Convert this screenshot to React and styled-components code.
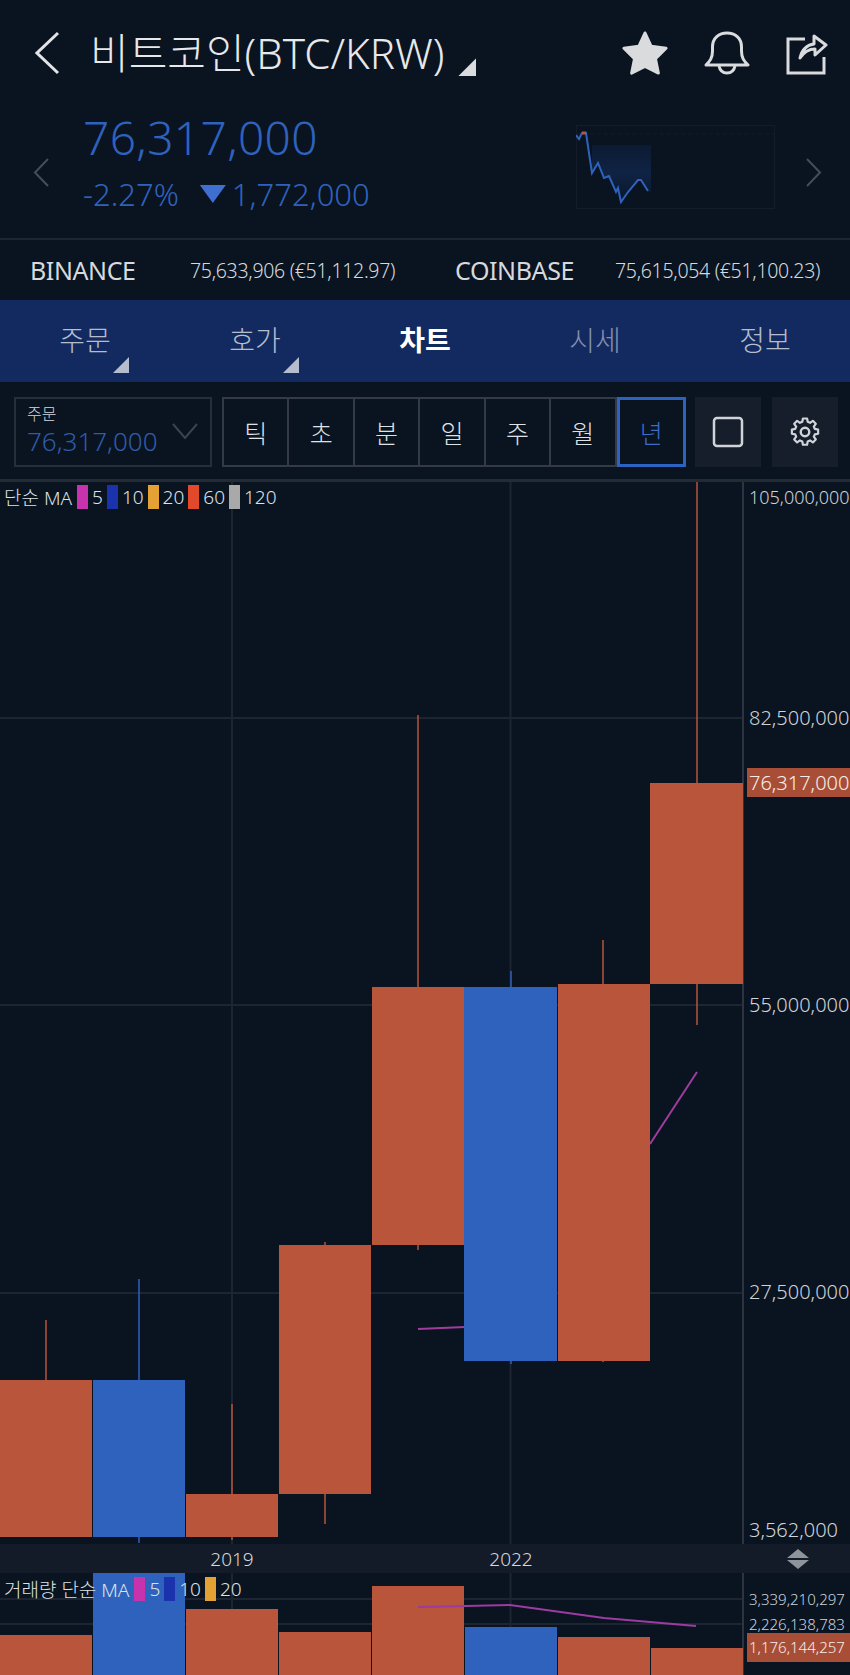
import styled, { createGlobalStyle } from "styled-components";

const RED = "#b9553a";
const BLUE = "#2e62bd";
const BG = "#0a1320";
const GRID = "#1c2531";
const TEXT = "#d6dade";

const GlobalStyle = createGlobalStyle`
  html, body {
    margin: 0;
    padding: 0;
    background: ${BG};
  }
  * {
    box-sizing: border-box;
  }
`;

const Screen = styled.div`
  width: 850px;
  height: 1675px;
  overflow: hidden;
  background: ${BG};
  color: ${TEXT};
  font-family: "Noto Sans", "Noto Sans CJK KR", sans-serif;
`;

const Header = styled.header`
  height: 240px;
  border-bottom: 2px solid ${GRID};
`;

const TitleRow = styled.div`
  display: flex;
  align-items: center;
  height: 106px;
  padding: 0 22px 0 35px;
`;

const Title = styled.h1`
  flex: 1;
  margin: 0 0 0 30px;
  font-size: 42px;
  font-weight: 300;
  line-height: 56px;
  color: #e6e8ea;
  white-space: nowrap;
`;

const Corner = styled.span`
  display: inline-block;
  width: ${(p) => p.$size}px;
  height: ${(p) => p.$size}px;
  margin-left: ${(p) => p.$gap || 0}px;
  vertical-align: ${(p) => p.$drop || 0}px;
  background: ${(p) => p.$color};
  clip-path: polygon(100% 0, 100% 100%, 0 100%);
`;

const TitleIcons = styled.div`
  display: flex;
  align-items: center;
  gap: 36px;
`;

const PriceRow = styled.div`
  display: flex;
  align-items: center;
  height: 132px;
  padding: 0 28px 0 33px;
`;

const PriceBlock = styled.div`
  flex: 1;
  margin: -18px 0 0 33px;
  color: ${BLUE};
`;

const Price = styled.div`
  font-size: 46px;
  font-weight: 300;
  line-height: 50px;
  letter-spacing: 0.4px;
`;

const Change = styled.div`
  display: flex;
  align-items: center;
  margin-top: 12px;
  font-size: 31px;
  font-weight: 300;
  line-height: 40px;
`;

const DownMark = styled.span`
  width: 26px;
  height: 18px;
  margin: 0 6px 0 21px;
  background: #3f6fd0;
  clip-path: polygon(0 0, 100% 0, 50% 100%);
`;

const Spark = styled.svg`
  display: block;
  width: 199px;
  height: 84px;
  margin: 0 30px 10px 0;
`;

const ExchangeRow = styled.div`
  display: flex;
  align-items: center;
  height: 60px;
  padding: 0 0 0 30px;
`;

const ExchangeName = styled.span`
  width: ${(p) => p.$width}px;
  font-size: 25px;
  font-weight: 400;
  letter-spacing: -0.4px;
`;

const ExchangeValue = styled.span`
  width: ${(p) => p.$width}px;
  font-size: 19.5px;
  font-weight: 300;
  letter-spacing: -0.3px;
  white-space: nowrap;
`;

const TabBar = styled.nav`
  display: grid;
  grid-template-columns: repeat(5, 170px);
  height: 82px;
  background: #122a5f;
`;

const Tab = styled.div`
  position: relative;
  display: flex;
  align-items: center;
  justify-content: center;
  padding-bottom: 4px;
  font-size: 28px;
  font-weight: ${(p) => (p.$active ? 700 : 300)};
  color: ${(p) => (p.$active ? "#ffffff" : p.$dim ? "#8290ad" : "#b4bccd")};
`;

const TabCorner = styled.span`
  position: absolute;
  top: 57px;
  left: 113px;
  line-height: 0;
`;

const Toolbar = styled.div`
  display: flex;
  align-items: flex-start;
  height: 100px;
  padding: 15px 0 0 14px;
  border-bottom: 3px solid #232b36;
`;

const OrderBox = styled.div`
  position: relative;
  width: 198px;
  height: 70px;
  margin-right: 10px;
  padding: 5px 0 0 11px;
  border: 2px solid #262e39;
`;

const OrderLabel = styled.div`
  font-size: 16px;
  font-weight: 300;
  line-height: 20px;
`;

const OrderPrice = styled.div`
  font-size: 26px;
  font-weight: 300;
  line-height: 34px;
  color: #2f5ca8;
`;

const OrderChevron = styled.svg`
  position: absolute;
  right: 12px;
  top: 24px;
  width: 26px;
  height: 16px;
`;

const Segments = styled.div`
  display: flex;
  width: 464px;
  height: 70px;
  margin-right: 9px;
  border: 2px solid #333a45;
  border-right: 0;
`;

const Segment = styled.div`
  display: flex;
  flex: 1;
  align-items: center;
  justify-content: center;
  margin: ${(p) => (p.$active ? "-2px 0" : 0)};
  font-size: 25px;
  font-weight: 300;
  color: ${(p) => (p.$active ? "#3a6cc8" : "#dfe2e5")};
  border: ${(p) => (p.$active ? "3px solid #2c62c0" : "0")};
  border-right: ${(p) => (p.$active ? "3px solid #2c62c0" : "2px solid #333a45")};
`;

const SquareButton = styled.div`
  display: flex;
  align-items: center;
  justify-content: center;
  width: 66px;
  height: 70px;
  margin-right: 11px;
  background: #161e2b;
`;

const Pane = styled.div`
  position: relative;
  height: ${(p) => p.$height}px;
  overflow: hidden;
`;

const ChartSvg = styled.svg`
  display: block;
  width: 850px;
  height: 100%;
`;

const Legend = styled.div`
  position: absolute;
  left: 4px;
  top: ${(p) => p.$top}px;
  display: flex;
  align-items: center;
  height: 24px;
  font-size: 19px;
  font-weight: 300;
  color: #dfe2e5;
  white-space: nowrap;
`;

const LegendName = styled.span`
  margin-right: 5px;
`;

const Swatch = styled.span`
  width: 11px;
  height: 24px;
  margin: 0 4px 0 0;
  background: ${(p) => p.$color};
`;

const LegendValue = styled.span`
  margin-right: 4px;
`;

const AxisLabel = styled.div`
  position: absolute;
  left: 749px;
  width: 101px;
  font-size: ${(p) => p.$size || 20}px;
  font-weight: 300;
  line-height: 24px;
  white-space: nowrap;
  color: #cfd4d9;
  transform: translateY(-50%);
`;

const PriceTag = styled.div`
  position: absolute;
  left: 747px;
  width: 103px;
  height: ${(p) => p.$height}px;
  padding-left: 2px;
  background: #a84e37;
  color: #f3eeea;
  font-size: ${(p) => p.$size}px;
  font-weight: 300;
  line-height: ${(p) => p.$height}px;
  white-space: nowrap;
`;

const TimeAxis = styled.div`
  position: relative;
  display: flex;
  align-items: center;
  height: 29px;
  background: #131b28;
`;

const YearLabel = styled.span`
  position: absolute;
  left: ${(p) => p.$x}px;
  transform: translateX(-50%);
  font-size: 19px;
  font-weight: 300;
  color: #d5d9dd;
`;

const SortMark = styled.svg`
  position: absolute;
  left: 786px;
  top: 5px;
  width: 24px;
  height: 20px;
`;

const candles = [
  { x: 0, w: 92, open: 1380, close: 1537, high: 1320, low: 1537, color: RED, wick: 46 },
  { x: 93, w: 92, open: 1380, close: 1537, high: 1279, low: 1543, color: BLUE, wick: 139 },
  { x: 186, w: 92, open: 1494, close: 1537, high: 1404, low: 1540, color: RED, wick: 232 },
  { x: 279, w: 92, open: 1245, close: 1494, high: 1242, low: 1524, color: RED, wick: 325 },
  { x: 372, w: 92, open: 987, close: 1245, high: 715, low: 1250, color: RED, wick: 418 },
  { x: 464, w: 93, open: 987, close: 1361, high: 971, low: 1364, color: BLUE, wick: 511 },
  { x: 558, w: 92, open: 984, close: 1361, high: 940, low: 1362, color: RED, wick: 603 },
  { x: 650, w: 93, open: 783, close: 984, high: 481, low: 1025, color: RED, wick: 697 },
];

const volumes = [
  { x: 0, w: 92, top: 1635, color: RED },
  { x: 93, w: 92, top: 1573, color: BLUE },
  { x: 186, w: 92, top: 1609, color: RED },
  { x: 279, w: 92, top: 1632, color: RED },
  { x: 372, w: 92, top: 1586, color: RED },
  { x: 465, w: 92, top: 1627, color: BLUE },
  { x: 558, w: 92, top: 1637, color: RED },
  { x: 651, w: 92, top: 1648, color: RED },
];

const priceLabels = [
  { y: 497, text: "105,000,000", size: 18 },
  { y: 718, text: "82,500,000" },
  { y: 1005, text: "55,000,000" },
  { y: 1292, text: "27,500,000" },
  { y: 1530, text: "3,562,000" },
];

const segments = ["틱", "초", "분", "일", "주", "월", "년"];
const PRICE_TOP = 482;
const VOLUME_TOP = 1573;

const sparkPoints =
  "0,10 3,14 6,8 10,8 16,48 22,38 28,53 33,51 40,67 42,63 45,77 52,67 62,55 65,55 72,66";

function StarIcon() {
  return (
    <svg width="46" height="46" viewBox="0 0 48 46">
      <path
        d="M24 2 L30.5 16 L46 18 L35 29 L38 44 L24 37 L10 44 L13 29 L2 18 L17.5 16 Z"
        fill="#d9dbdd"
        stroke="#d9dbdd"
        strokeWidth="3"
        strokeLinejoin="round"
      />
    </svg>
  );
}

function BellIcon() {
  return (
    <svg width="46" height="44" viewBox="0 0 46 44" fill="none" stroke="#d9dbdd" strokeWidth="3">
      <path
        d="M2 34 C6 30 8.5 27 8.5 20 V16 C8.5 7 15 2 23 2 C31 2 37.5 7 37.5 16 V20 C37.5 27 40 30 44 34 Z"
        strokeLinejoin="round"
      />
      <path d="M15 35 C16 40 19 42 23 42 C27 42 30 40 31 35" />
    </svg>
  );
}

function ShareIcon() {
  return (
    <svg width="42" height="44" viewBox="0 0 42 44" fill="none" stroke="#d9dbdd" strokeWidth="3">
      <path d="M19 8 H2 V42 H38 V26" />
      <path
        d="M14 27 C16 18 21 14 28 13 V5 L40 14 L29 24 V18 C23 18 18 21 14 27 Z"
        strokeLinejoin="round"
      />
    </svg>
  );
}

function ChevronIcon({ dir, color, width, height, strokeWidth }) {
  const d = dir === "left" ? `M${width - 2} 2 L2 ${height / 2} L${width - 2} ${height - 2}` : `M2 2 L${width - 2} ${height / 2} L2 ${height - 2}`;
  return (
    <svg width={width} height={height} fill="none" stroke={color} strokeWidth={strokeWidth}>
      <path d={d} />
    </svg>
  );
}

function GearIcon() {
  return (
    <svg width="32" height="32" viewBox="0 0 24 24" fill="none" stroke="#d0d4d9" strokeWidth="1.8" strokeLinejoin="round">
      <path d="M10.3 2.5h3.4l.5 2.7 1.9.8 2.3-1.6 2.4 2.4-1.6 2.3.8 1.9 2.7.5v3.4l-2.7.5-.8 1.9 1.6 2.3-2.4 2.4-2.3-1.6-1.9.8-.5 2.7h-3.4l-.5-2.7-1.9-.8-2.3 1.6-2.4-2.4 1.6-2.3-.8-1.9-2.7-.5v-3.4l2.7-.5.8-1.9-1.6-2.3 2.4-2.4 2.3 1.6 1.9-.8z" transform="translate(12 12) scale(0.92) translate(-12 -13.5)" />
      <circle cx="12" cy="12" r="3.2" />
    </svg>
  );
}

function PriceChart() {
  return (
    <ChartSvg viewBox={`0 ${PRICE_TOP} 850 1062`}>
      <g stroke={GRID} strokeWidth="2">
        <line x1="0" x2="743" y1="718" y2="718" />
        <line x1="0" x2="743" y1="1005" y2="1005" />
        <line x1="0" x2="743" y1="1293" y2="1293" />
        <line x1="232" x2="232" y1="482" y2="1544" />
        <line x1="510.5" x2="510.5" y1="482" y2="1544" />
      </g>
      <line x1="743" x2="743" y1="482" y2="1544" stroke="#2b3440" strokeWidth="2" />
      <polyline points="418,1329 465,1327" fill="none" stroke="#a13c9f" strokeWidth="2" />
      <polyline points="650,1144 697,1072" fill="none" stroke="#a13c9f" strokeWidth="2" />
      {candles.map((c) => (
        <g key={c.x}>
          <line x1={c.wick} x2={c.wick} y1={c.high} y2={c.low} stroke={c.color} strokeWidth="1.5" />
          <rect x={c.x} y={c.open} width={c.w} height={c.close - c.open} fill={c.color} />
        </g>
      ))}
    </ChartSvg>
  );
}

function VolumeChart() {
  return (
    <ChartSvg viewBox={`0 ${VOLUME_TOP} 850 102`}>
      <g stroke={GRID} strokeWidth="2">
        <line x1="0" x2="743" y1="1599" y2="1599" />
        <line x1="0" x2="743" y1="1624" y2="1624" />
        <line x1="232" x2="232" y1="1573" y2="1675" />
        <line x1="510.5" x2="510.5" y1="1573" y2="1675" />
      </g>
      <line x1="743" x2="743" y1="1573" y2="1675" stroke="#2b3440" strokeWidth="2" />
      {volumes.map((v) => (
        <rect key={v.x} x={v.x} y={v.top} width={v.w} height={1675 - v.top} fill={v.color} />
      ))}
      <polyline
        points="418,1607 465,1606 510,1605 604,1618 696,1626"
        fill="none"
        stroke="#9c3ba0"
        strokeWidth="2"
      />
    </ChartSvg>
  );
}

export default function App() {
  return (
    <Screen>
      <GlobalStyle />
      <Header>
        <TitleRow>
          <ChevronIcon dir="left" color="#e2e4e6" width={25} height={44} strokeWidth={3} />
          <Title>
            비트코인(BTC/KRW)
            <Corner $size={18} $gap={14} $drop={-7} $color="#d9dbdd" />
          </Title>
          <TitleIcons>
            <StarIcon />
            <BellIcon />
            <ShareIcon />
          </TitleIcons>
        </TitleRow>
        <PriceRow>
          <ChevronIcon dir="left" color="#454d58" width={17} height={31} strokeWidth={2} />
          <PriceBlock>
            <Price>76,317,000</Price>
            <Change>
              -2.27%
              <DownMark />
              1,772,000
            </Change>
          </PriceBlock>
          <Spark viewBox="0 0 199 84">
            <defs>
              <linearGradient id="sparkFill" x1="0" x2="0" y1="0" y2="1">
                <stop offset="0" stopColor="#0c1b33" />
                <stop offset="0.5" stopColor="#0f2344" />
                <stop offset="1" stopColor="#0a1626" />
              </linearGradient>
            </defs>
            <rect x="0.5" y="0.5" width="198" height="83" fill="none" stroke="#141c29" />
            <line x1="0" x2="199" y1="9" y2="9" stroke="#141c29" strokeDasharray="4 3" />
            <polygon points="16,20 75,20 75,68 72,66 65,55 62,55 52,67 45,77 42,63 40,67 33,51 28,53 22,38 16,48" fill="url(#sparkFill)" />
            <polyline points={sparkPoints} fill="none" stroke="#2f62bd" strokeWidth="2" />
            <polyline points="6,8 10,8" fill="none" stroke={RED} strokeWidth="3" />
          </Spark>
          <ChevronIcon dir="right" color="#454d58" width={17} height={31} strokeWidth={2} />
        </PriceRow>
      </Header>

      <ExchangeRow>
        <ExchangeName $width={160}>BINANCE</ExchangeName>
        <ExchangeValue $width={265}>75,633,906 (€51,112.97)</ExchangeValue>
        <ExchangeName $width={160}>COINBASE</ExchangeName>
        <ExchangeValue $width={205}>75,615,054 (€51,100.23)</ExchangeValue>
      </ExchangeRow>

      <TabBar>
        <Tab>
          주문
          <TabCorner>
            <Corner $size={16} $color="#b4bccd" />
          </TabCorner>
        </Tab>
        <Tab>
          호가
          <TabCorner>
            <Corner $size={16} $color="#b4bccd" />
          </TabCorner>
        </Tab>
        <Tab $active>차트</Tab>
        <Tab $dim>시세</Tab>
        <Tab>정보</Tab>
      </TabBar>

      <Toolbar>
        <OrderBox>
          <OrderLabel>주문</OrderLabel>
          <OrderPrice>76,317,000</OrderPrice>
          <OrderChevron viewBox="0 0 26 16" fill="none" stroke="#3a434f" strokeWidth="2">
            <path d="M1 1 L13 15 L25 1" />
          </OrderChevron>
        </OrderBox>
        <Segments>
          {segments.map((s) => (
            <Segment key={s} $active={s === "년"}>
              {s}
            </Segment>
          ))}
        </Segments>
        <SquareButton>
          <svg width="32" height="32" fill="none" stroke="#d0d4d9" strokeWidth="2.5">
            <rect x="2" y="2" width="28" height="28" rx="3" />
          </svg>
        </SquareButton>
        <SquareButton>
          <GearIcon />
        </SquareButton>
      </Toolbar>

      <Pane $height={1062}>
        <PriceChart />
        <Legend $top={3}>
          <LegendName>단순 MA</LegendName>
          <Swatch $color="#c732ad" />
          <LegendValue>5</LegendValue>
          <Swatch $color="#1a33ad" />
          <LegendValue>10</LegendValue>
          <Swatch $color="#e3a233" />
          <LegendValue>20</LegendValue>
          <Swatch $color="#e2492a" />
          <LegendValue>60</LegendValue>
          <Swatch $color="#a9a9a9" />
          <LegendValue>120</LegendValue>
        </Legend>
        {priceLabels.map((l) => (
          <AxisLabel key={l.text} $size={l.size} style={{ top: l.y - PRICE_TOP }}>
            {l.text}
          </AxisLabel>
        ))}
        <PriceTag $height={29} $size={20} style={{ top: 768 - PRICE_TOP }}>
          76,317,000
        </PriceTag>
      </Pane>

      <TimeAxis>
        <YearLabel $x={232}>2019</YearLabel>
        <YearLabel $x={511}>2022</YearLabel>
        <SortMark viewBox="0 0 24 20">
          <path d="M12 0 L23 9 H1 Z M1 11 H23 L12 20 Z" fill="#8e949c" />
        </SortMark>
      </TimeAxis>

      <Pane $height={102}>
        <VolumeChart />
        <Legend $top={4}>
          <LegendName>거래량 단순 MA</LegendName>
          <Swatch $color="#c732ad" />
          <LegendValue>5</LegendValue>
          <Swatch $color="#1a33ad" />
          <LegendValue>10</LegendValue>
          <Swatch $color="#e3a233" />
          <LegendValue>20</LegendValue>
        </Legend>
        <AxisLabel $size={15} style={{ top: 1599 - VOLUME_TOP }}>
          3,339,210,297
        </AxisLabel>
        <AxisLabel $size={15} style={{ top: 1624 - VOLUME_TOP }}>
          2,226,138,783
        </AxisLabel>
        <PriceTag $height={29} $size={15} style={{ top: 1633 - VOLUME_TOP }}>
          1,176,144,257
        </PriceTag>
      </Pane>
    </Screen>
  );
}
